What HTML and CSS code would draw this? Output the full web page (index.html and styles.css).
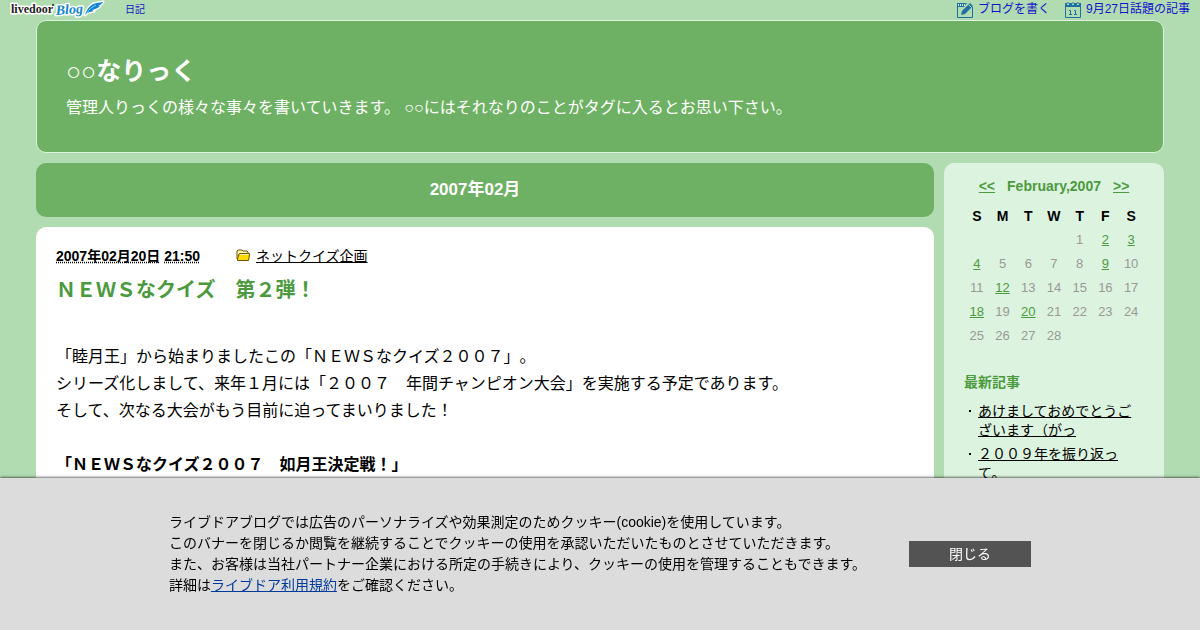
FILE: index.html
```html
<!DOCTYPE html>
<html lang="ja">
<head>
<meta charset="utf-8">
<title>○○なりっく : 2007年02月</title>
<link rel="stylesheet" href="styles.css">
</head>
<body>
<nav class="topbar">
  <a class="brand" href="#" aria-label="livedoor Blog">
    <svg width="96" height="20" viewBox="0 0 96 20">
      <g stroke="#fff" stroke-width="3" stroke-linejoin="round" paint-order="stroke">
        <text class="brand-name" x="1" y="13">livedoor</text>
        <text class="brand-blog" x="46" y="15" transform="rotate(-4 46 15)">Blog</text>
        <path d="M75 15C77 9 80 4 87 3L93 2C91 5 90 5 88 6L90 6C87 9 85 9 82 10L84 11C81 12 79 12 77 13Z" fill="#1183d2"/>
      </g>
      <circle cx="43" cy="5" r="1" fill="#222"/>
      <path d="M77 13C79 9 82 7 86 5" fill="none" stroke="#8fd0f5" stroke-width="1"/>
    </svg>
  </a>
  <a class="genre" href="#">日記</a>
  <a class="tool" href="#">
    <svg width="16" height="16" viewBox="0 0 16 16">
      <path d="M.5 1V15.500H15.500V5" fill="none" stroke="#206fa3"/>
      <path d="M0 1H10L7 5H0Z" fill="#206fa3"/>
      <path d="M1 3H8" stroke="#d2ead9" stroke-width="2" stroke-dasharray="1 1"/>
      <path d="M4 13L5 9L13 1L16 4L8 12Z" fill="#206fa3"/>
      <path d="M11.500 2.500L14.500 5.500" stroke="#b1dbb0"/>
    </svg>
    ブログを書く</a>
  <a class="tool" href="#">
    <svg width="16" height="16" viewBox="0 0 16 16">
      <path d="M.5 2V15.500H15.500V2" fill="none" stroke="#206fa3"/>
      <path d="M0 1H2V3H4V1H7V3H9V1H12V3H14V1H16V5H0Z" fill="#206fa3"/>
      <path d="M3 0V2M8 0V2M13 0V2" stroke="#206fa3"/>
      <path d="M4 8.500H5.500V13M4 12.500H7M9 8.500H10.500V13M9 12.500H12" fill="none" stroke="#206fa3"/>
    </svg>
    9月27日話題の記事</a>
</nav>

<div class="page">
  <header class="banner">
    <h1>○○なりっく</h1>
    <p>管理人りっくの様々な事々を書いていきます。 ○○にはそれなりのことがタグに入るとお思い下さい。</p>
  </header>
  <div class="columns">
    <main class="content">
      <h2 class="archive">2007年02月</h2>
      <article class="entry">
        <div class="meta">
          <span class="date"><abbr title="2007-02-20">2007年02月20日</abbr> <abbr title="21:50">21:50</abbr></span>
          <svg width="15" height="13" viewBox="0 0 15 13">
            <path d="M1 10V2L2 1H6L7 2H11L12 3V5" fill="#fff6b0" stroke="#6b5500"/>
            <path d="M1.500 11.500V10L3 5L4 4.500H13.500V6L12.500 11.500Z" fill="#ffda00" stroke="#6b5500"/>
            <path d="M4 5.500H12.500" stroke="#fff6b0"/>
          </svg>
          <a href="#">ネットクイズ企画</a>
        </div>
        <h3>ＮＥＷＳなクイズ　第２弾！</h3>
        <div class="body">
          <p>「睦月王」から始まりましたこの「ＮＥＷＳなクイズ２００７」。<br>シリーズ化しまして、来年１月には「２００７　年間チャンピオン大会」を実施する予定であります。<br>そして、次なる大会がもう目前に迫ってまいりました！</p>
          <p><strong>「ＮＥＷＳなクイズ２００７　如月王決定戦！」</strong></p>
        </div>
      </article>
    </main>
    <aside class="side">
      <table class="calendar">
        <caption><a href="#">&lt;&lt;</a><span>February,2007</span><a href="#">&gt;&gt;</a></caption>
        <thead><tr><th>S</th><th>M</th><th>T</th><th>W</th><th>T</th><th>F</th><th>S</th></tr></thead>
        <tbody>
          <tr><td></td><td></td><td></td><td></td><td>1</td><td><a href="#">2</a></td><td><a href="#">3</a></td></tr>
          <tr><td><a href="#">4</a></td><td>5</td><td>6</td><td>7</td><td>8</td><td><a href="#">9</a></td><td>10</td></tr>
          <tr><td>11</td><td><a href="#">12</a></td><td>13</td><td>14</td><td>15</td><td>16</td><td>17</td></tr>
          <tr><td><a href="#">18</a></td><td>19</td><td><a href="#">20</a></td><td>21</td><td>22</td><td>23</td><td>24</td></tr>
          <tr><td>25</td><td>26</td><td>27</td><td>28</td><td></td><td></td><td></td></tr>
        </tbody>
      </table>
      <h2>最新記事</h2>
      <ul class="recent">
        <li><a href="#">あけましておめでとうございます（がっ</a></li>
        <li><a href="#">２００９年を振り返って。</a></li>
      </ul>
    </aside>
  </div>
</div>

<section class="cookie">
  <p>ライブドアブログでは広告のパーソナライズや効果測定のためクッキー(cookie)を使用しています。<br>このバナーを閉じるか閲覧を継続することでクッキーの使用を承認いただいたものとさせていただきます。<br>また、お客様は当社パートナー企業における所定の手続きにより、クッキーの使用を管理することもできます。<br>詳細は<a href="#">ライブドア利用規約</a>をご確認ください。</p>
  <button type="button">閉じる</button>
</section>
</body>
</html>
```
FILE: styles.css
```css
* { box-sizing: border-box; }
body {
  margin: 0;
  background: #b1dbb0;
  color: #000;
  font-family: "Liberation Sans", "Noto Sans CJK JP", sans-serif;
  font-size: 16px;
  text-spacing-trim: space-all;
}
h1, h2, h3, p, ul { margin: 0; padding: 0; }
svg { display: block; flex: none; }

.topbar {
  display: flex;
  height: 20px;
  padding: 0 10px;
  font-size: 12px;
  line-height: 19px;
}
.topbar a { color: #1414cc; text-decoration: none; }
.brand-name { font: bold 12px "Liberation Serif", serif; fill: #222; }
.brand-blog { font: italic bold 14px "Liberation Serif", serif; fill: #1183d2; }
.topbar .genre { margin: 0 auto 0 19px; font-size: 10px; line-height: 20px; }
.tool { display: flex; gap: 5px; margin-left: 15px; }
.tool svg { margin-top: 2px; }

.page { margin: 0 3%; }
.banner {
  padding: 32px 29px 31px;
  border: 1px solid #dcf3df;
  border-radius: 10px;
  background: #6fb164;
  color: #fff;
}
.banner h1 { font-size: 25px; line-height: 36px; }
.banner p { margin-top: 6px; line-height: 26px; }
.columns { display: flex; gap: 10px; margin-top: 10px; }
.content { flex: 1; min-width: 0; }
.archive {
  margin-bottom: 10px;
  padding: 14px 40px 14px 20px;
  border-radius: 10px;
  background: #6fb164;
  color: #fff;
  font-size: 17px;
  line-height: 26px;
  text-align: center;
}
.entry {
  min-height: 420px;
  padding: 19px 20px;
  border-radius: 10px 10px 0 0;
  background: #fff;
}
.meta { display: flex; font-size: 14px; line-height: 20px; }
.date { margin-right: 36px; font-weight: bold; }
.date abbr { text-decoration: underline dotted; }
.meta svg { margin: 3px 5px 0 0; }
.meta a { color: #000; }
.entry h3 { margin-top: 8px; color: #4c9a3e; font-size: 20px; line-height: 32px; }
.body { margin-top: 37px; line-height: 27px; }
.body p { margin-bottom: 27px; }

.side {
  flex: 0 0 220px;
  padding: 11px 20px;
  border-radius: 10px 10px 0 0;
  background: #dcf3df;
  font-size: 14px;
}
.calendar { width: 100%; table-layout: fixed; border-collapse: collapse; text-align: center; line-height: 24px; }
.calendar caption { margin-bottom: 6px; color: #4c9a3e; font-weight: bold; }
.calendar caption span { margin: 0 12px; }
.calendar a { color: #4c9a3e; }
.calendar th, .calendar td { height: 24px; padding: 0; }
.calendar td { color: #999; font-size: 13px; }
.side h2 { margin-top: 24px; color: #4c9a3e; font-size: 14px; line-height: 20px; }
.recent { margin-top: 10px; padding-left: 14px; list-style: none; line-height: 19px; }
.recent li { margin-bottom: 5px; padding-right: 10px; }
.recent li::before { content: ""; float: left; width: 2px; height: 2px; margin: 8px 0 0 -9px; background: #000; }
.recent a { color: #000; }

.cookie {
  position: fixed;
  right: 0;
  bottom: 0;
  left: 0;
  display: flex;
  justify-content: center;
  align-items: center;
  gap: 43px;
  padding: 34px 20px;
  background: #dcdcdc;
  box-shadow: 0 0 3px #000;
  font-size: 14px;
  line-height: 21px;
}
.cookie a { color: #003a9b; }
.cookie button {
  width: 122px;
  height: 26px;
  padding: 0;
  border: 0;
  background: #535353;
  color: #fff;
  font: inherit;
}
```
